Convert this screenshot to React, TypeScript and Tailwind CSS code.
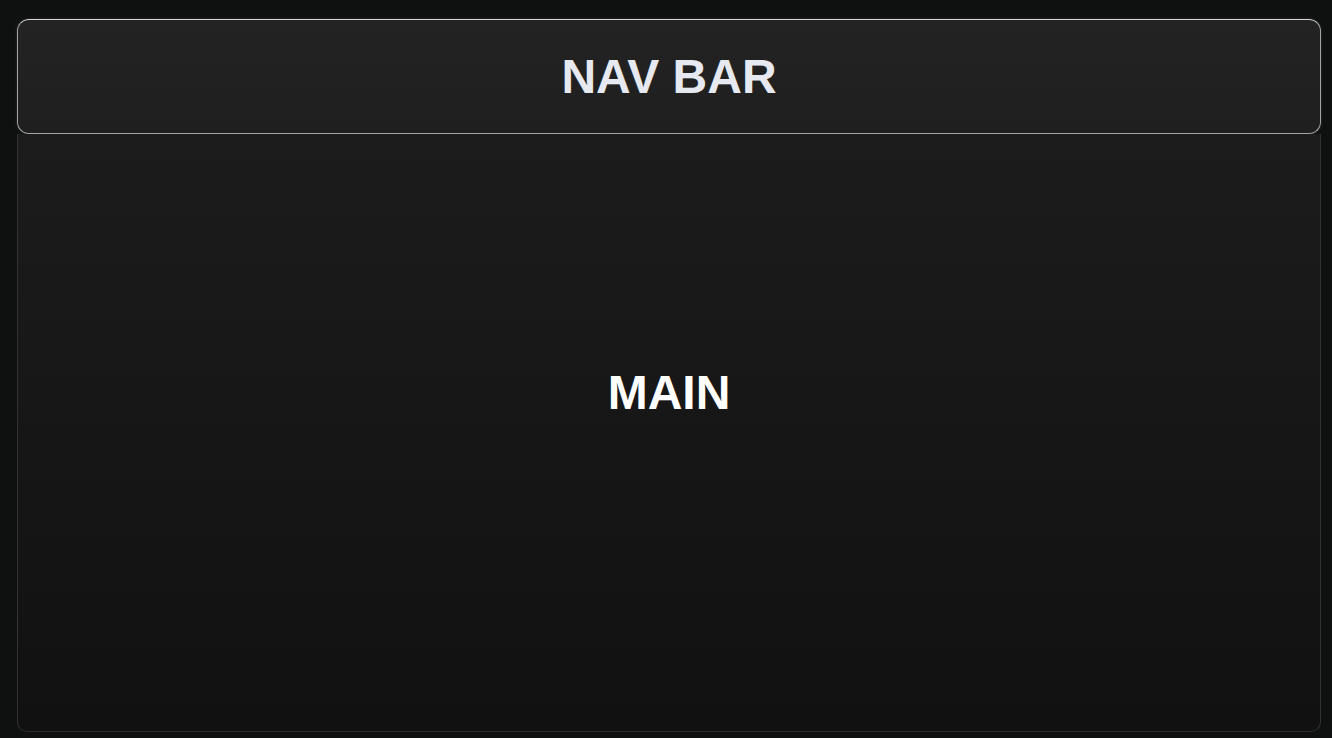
export default function App() {
  return (
    <div
      className="flex h-screen w-full flex-col bg-[#0f1111] pb-[6px] pl-[17px] pr-[11px] pt-[19px]"
      style={{ fontFamily: '"Liberation Sans", Arial, sans-serif' }}
    >
      <div className="flex h-full flex-col rounded-[12px]">
        <header className="flex h-[115px] shrink-0 items-center justify-center rounded-[12px] border border-[#a3a3a3] border-t-[#d4d4d4] bg-gradient-to-b from-[#232323] to-[#1f1f20] shadow-[0_0_3px_rgba(255,255,255,0.15)]">
          <h1 className="text-[48px] font-bold leading-none text-[#e6e9ef]">NAV BAR</h1>
        </header>
        <main className="flex flex-1 items-center justify-center rounded-b-[10px] border-x border-b border-[#2b2b2b] border-x-[#333333] bg-gradient-to-b from-[#1c1c1c] to-[#111111] pb-[80px]">
          <h2 className="text-[48px] font-bold leading-none text-white">MAIN</h2>
        </main>
      </div>
    </div>
  )
}
